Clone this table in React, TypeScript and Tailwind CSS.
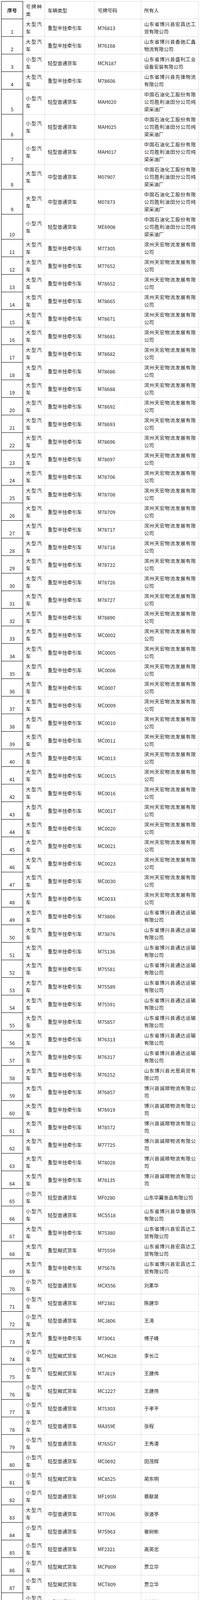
import React from "react";

const SD = "山东省博兴县宏昌达工贸有限公司";
const SY = "中国石油化工股份有限公司胜利油田分公司纯梁采油厂";
const TH = "滨州天宏物流发展有限公司";
const TD = "山东省博兴县通达运输有限公司";
const CS = "博兴县诚顺物流有限公司";
const Q = "重型半挂牵引车";
const LP = "轻型普通货车";
const LX = "轻型厢式货车";
const ZP = "中型普通货车";

type Row = [string, string, string, string];

const rows: Row[] = [
  ["大", Q, "M76813", SD],
  ["大", Q, "M76168", "山东省博兴县香驰汇鑫物流有限公司"],
  ["小", LP, "MCN187", "山东省博兴县盛利工业设备安装有限公司"],
  ["大", Q, "M78608", "山东省博兴县先锋物流有限公司"],
  ["小", LP, "MAH020", SY],
  ["小", LP, "MAH025", SY],
  ["小", LP, "MAH017", SY],
  ["大", ZP, "M07907", SY],
  ["大", ZP, "M07873", SY],
  ["小", LP, "ME6908", SY],
  ...[
    "M77305", "M77652", "M78652", "M78665", "M78671", "M78681", "M78682", "M78686", "M78688",
    "M78692", "M78693", "M78696", "M78697", "M78706", "M78708", "M78709", "M78717", "M78718",
    "M78722", "M78726", "M78727", "M78890", "MC0002", "MC0005", "MC0006", "MC0007", "MC0009",
    "MC0010", "MC0011", "MC0013", "MC0015", "MC0016", "MC0017", "MC0020", "MC0021", "MC0023",
    "MC0030", "MC0033",
  ].map((p): Row => ["大", Q, p, TH]),
  ...["M73866", "M73876", "M75136", "M75581", "M75589", "M75591", "M75857", "M76313", "M76317"].map(
    (p): Row => ["大", Q, p, TD]
  ),
  ["大", Q, "M76252", "山东博兴县光恩商贸有限公司"],
  ...["M76857", "M76919", "M78572", "M77725", "M78028", "M78135"].map((p): Row => ["大", Q, p, CS]),
  ["小", LP, "MF0280", "山东华翼食品有限公司"],
  ["小", LP, "MCS518", "山东省博兴县华鲁钢铁有限公司"],
  ["大", Q, "M75380", SD],
  ["大", "重型厢式货车", "M75559", SD],
  ["大", Q, "M75678", SD],
  ["小", LP, "MCX556", "刘素华"],
  ["小", LP, "MF2381", "陈建华"],
  ["小", LP, "MCJ806", "王涛"],
  ["大", Q, "M73061", "傅子峰"],
  ["小", LX, "MCH628", "李长江"],
  ["小", LX, "M7J819", "王建伟"],
  ["小", LX, "MC1227", "王建伟"],
  ["小", LP, "M75303", "于孝平"],
  ["小", LP, "MA359E", "张程"],
  ["小", LP, "M765G7", "王秀清"],
  ["小", LP, "MC0692", "田茂辉"],
  ["小", LX, "MC8525", "蔺东明"],
  ["小", LP, "MF195N", "蔡献泉"],
  ["大", ZP, "M77036", "张道亭"],
  ["小", LP, "M7S963", "崔树彬"],
  ["小", LP, "MF2321", "高英忠"],
  ["小", LX, "MCP809", "贾立华"],
  ["小", LX, "MCT809", "贾立华"],
  ["小", LP, "MK928U", "刘其彬"],
  ["小", LP, "MCD786", "刘建宾"],
  ["小", LP, "M6775X", "刘福华"],
  ["大", ZP, "M73948", "田茂永"],
  ["小", LP, "MF3759", "韩霞"],
  ["小", LP, "MC0350", "韩在勇"],
  ["小", LP, "MCB798", "崔学峰"],
  ["大", ZP, "M75709", "崔京广"],
  ["小", LP, "MCQ338", "崔秋生"],
  ["小", LP, "MCC663", "王来志"],
  ["小", LP, "MG002R", "韩秀梅"],
  ["小", LP, "MF3225", "刘翠英"],
  ["小", LX, "MD0129", "郝效顺"],
  ["大", "中型仓栅式货车", "M76299", "卢振强"],
  ["小", LX, "M872Y9", "陈小抡"],
  ["小", LX, "M78285", "杨东风"],
  ["大", ZP, "M76079", "张卫兵"],
  ["小", LX, "MF2655", "张卫兵"],
  ["小", LP, "MCA936", "牟希勇"],
  ["小", LP, "M0239C", "薛树礼"],
  ["小", LP, "M77Z52", "于卫清"],
  ["小", LP, "MFJ861", "张杰"],
  ["小", LP, "MCD785", "郑德礼"],
  ["小", LP, "M7C180", "徐涛"],
  ["小", LP, "MCD328", "李怀杰"],
  ["小", LP, "M3639F", "武传永"],
  ["小", LX, "M1973J", "任学堂"],
  ["小", LP, "M78249", "张新兴"],
  ["小", LP, "M76876", "秦占东"],
];

function chunk(s: string, n: number): string[] {
  const chars = Array.from(s);
  const out: string[] = [];
  for (let i = 0; i < chars.length; i += n) out.push(chars.slice(i, i + n).join(""));
  return out;
}

function Lines({ text, per }: { text: string; per: number }) {
  const ls = chunk(text, per);
  return (
    <div className="w-full">
      {ls.map((l, i) => (
        <div
          key={i}
          className={i < ls.length - 1 ? "text-justify [text-align-last:justify]" : "text-left"}
        >
          {l}
        </div>
      ))}
    </div>
  );
}

const grid = "grid grid-cols-[56px_56px_128px_119px_147px] text-[12.5px] leading-[19px]";
const gcell = "flex items-center overflow-hidden border-r border-b border-[#d9d9d9] px-[7px]";
const dcell = "flex items-end justify-center overflow-hidden border-l border-r border-b pb-[3px]";

export default function App() {
  return (
    <div
      className="bg-white pt-[3px] pl-[3px] text-[#1c1c1c]"
      style={{ fontFamily: '"Noto Sans CJK SC", "Noto Sans", sans-serif' }}
    >
      <div className="w-[506px]">
        <div className={`${grid} h-[46px]`}>
          <div className="flex items-center justify-center border border-black font-bold">序号</div>
          <div className={`${gcell} border-t`}>
            <Lines text="号牌种类" per={3} />
          </div>
          <div className={`${gcell} border-t`}>车辆类型</div>
          <div className={`${gcell} border-t`}>号牌号码</div>
          <div className={`${gcell} border-t`}>所有人</div>
        </div>
        {rows.map((r, i) => {
          const n = i + 1;
          const tall = n >= 5 && n <= 10;
          let dc = "border-black";
          if (n === 108) dc = "border-l-black border-r-black border-b-[#2e7d32]";
          if (n === 109) dc = "border-[#2e7d32] text-[#1b5e20]";
          if (n === 89) dc = "border-l-[#3c6e3c] border-r-black border-b-[#3c6e3c]";
          if (n === 102) dc = "border-l-[#3c6e3c] border-r-black border-b-black";
          return (
            <div key={n} className={`${grid} ${tall ? "h-[64px]" : "h-[45px]"}`}>
              <div className={`${dcell} ${dc}`}>{n}</div>
              <div className={gcell}>
                <Lines text={`${r[0]}型汽车`} per={3} />
              </div>
              <div className={gcell}>{r[1]}</div>
              <div className={gcell}>{r[2]}</div>
              <div className={gcell}>
                <Lines text={r[3]} per={10} />
              </div>
            </div>
          );
        })}
      </div>
    </div>
  );
}
